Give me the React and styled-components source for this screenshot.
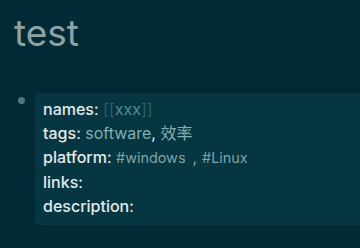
import React from 'react';
import styled, { createGlobalStyle } from 'styled-components';

const Global = createGlobalStyle`
  html, body {
    margin: 0;
    background: #002b36;
  }
  body {
    font-family: Inter, "Noto Sans CJK SC", sans-serif;
    -webkit-font-smoothing: antialiased;
  }
`;

const Page = styled.div`
  width: 360px;
  height: 248px;
  overflow: hidden;
  background: #002b36;
  padding: 11px 0 0 14px;
  box-sizing: border-box;
`;

const Title = styled.h1`
  margin: 0 0 38px;
  font-size: 37px;
  font-weight: 400;
  line-height: 44px;
  color: #8fa1a1;
`;

const Block = styled.div`
  display: flex;
  align-items: flex-start;
`;

const Bullet = styled.span`
  width: 7px;
  height: 7px;
  border-radius: 50%;
  background: #4d7a80;
  margin: 4px 10px 0 4px;
  flex-shrink: 0;
`;

const Props = styled.div`
  flex: 1;
  background: #063642;
  border-radius: 5px 0 0 5px;
  padding: 4px 8px 7px;
`;

const Row = styled.div`
  font-size: 16px;
  line-height: 24px;
  color: #e3e9e9;
  white-space: nowrap;
`;

const Key = styled.span`
  font-weight: 500;
`;

const Val = styled.span`
  color: ${p => p.$tone || '#7fb1b3'};
  font-size: ${p => p.$small ? '14.4px' : 'inherit'};
`;

const Bracket = styled.span`
  color: #2e5d65;
`;

const Sep = styled.span`
  color: #7ea4a6;
  margin: 0 5px 0 7px;
`;

export default function App() {
  return (
    <Page>
      <Global />
      <Title>test</Title>
      <Block>
        <Bullet />
        <Props>
          <Row>
            <Key>names</Key>: <Bracket>[[</Bracket><Val $tone="#4f8e94">xxx</Val><Bracket>]]</Bracket>
          </Row>
          <Row>
            <Key>tags</Key>: <Val>software</Val>, <Val>效率</Val>
          </Row>
          <Row>
            <Key>platform</Key>: <Val $tone="#7ea4a6" $small>#windows</Val><Sep>,</Sep><Val $tone="#7ea4a6" $small>#Linux</Val>
          </Row>
          <Row>
            <Key>links</Key>:
          </Row>
          <Row>
            <Key>description</Key>:
          </Row>
        </Props>
      </Block>
    </Page>
  );
}
